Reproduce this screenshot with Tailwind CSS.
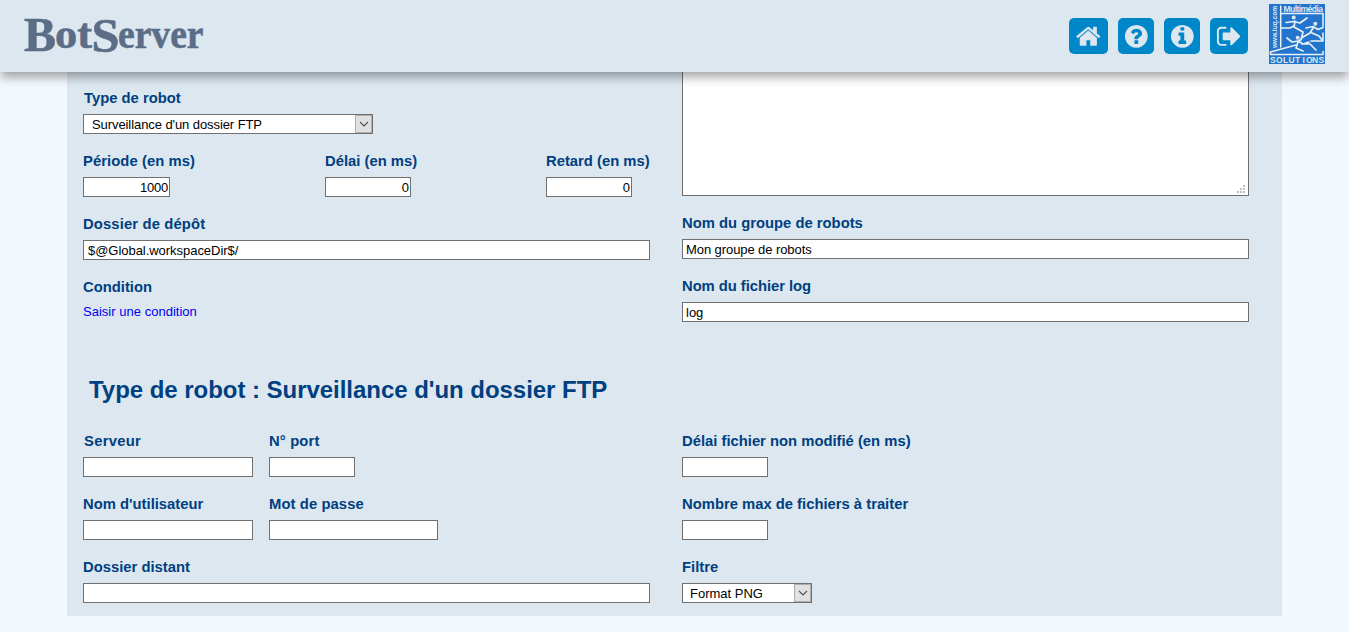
<!DOCTYPE html>
<html lang="fr">
<head>
<meta charset="utf-8">
<title>BotServer</title>
<script src="https://cdn.jsdelivr.net/npm/@tailwindcss/browser@4"></script>
</head>
<body class="h-[632px] overflow-hidden bg-[#f3f8fc] font-['Liberation_Sans',Arial,sans-serif]">
<div class="flex h-full flex-col">
  <header class="relative z-10 flex h-[72px] shrink-0 items-start justify-between bg-[#dce7ef] pr-6 shadow-[0_6px_10px_-1px_rgba(0,0,0,0.36)]">
    <svg class="h-[72px] w-[220px] fill-[#5b6d87] stroke-[#5b6d87] font-['Liberation_Serif',serif] font-bold" stroke-width="0.6" stroke-linejoin="round" viewBox="0 0 220 72" aria-label="BotServer">
      <text x="24" y="51" font-size="49" textLength="32" lengthAdjust="spacingAndGlyphs">B</text>
      <text x="55" y="47.500" font-size="43" textLength="37" lengthAdjust="spacingAndGlyphs">ot</text>
      <text x="91.500" y="52" font-size="49" textLength="28" lengthAdjust="spacingAndGlyphs">S</text>
      <text x="118" y="47.500" font-size="43" textLength="85.500" lengthAdjust="spacingAndGlyphs">erver</text>
    </svg>
    <div class="flex">
      <nav class="mt-[18px] mr-[21px] flex gap-2.5">
        <a class="flex h-9 w-[39px] items-center justify-center rounded-[5px] bg-[#0087c9]"><svg class="size-[26.67px] fill-[#dce7ef]" viewBox="0 0 1792 1792"><path d="M1472 992v480q0 26-19 45t-45 19h-384v-384h-256v384h-384q-26 0-45-19t-19-45v-480q0-1 .5-3t.5-3l575-474 575 474q1 2 1 6zm223-69l-62 74q-8 9-21 11h-3q-13 0-21-7l-692-577-692 577q-12 8-24 7-13-2-21-11l-62-74q-8-10-7-23.5t11-21.5l719-599q32-26 76-26t76 26l244 204v-195q0-14 9-23t23-9h192q14 0 23 9t9 23v408l219 182q10 8 11 21.5t-7 23.5z"/></svg></a>
        <a class="flex h-9 w-9 items-center justify-center rounded-[5px] bg-[#0087c9]"><svg class="size-[26.67px] shrink-0 fill-[#dce7ef]" viewBox="0 0 1792 1792"><path d="M1024 1376v-192q0-14-9-23t-23-9h-192q-14 0-23 9t-9 23v192q0 14 9 23t23 9h192q14 0 23-9t9-23zm256-672q0-88-55.5-163t-138.5-116-170-41q-243 0-371 213-15 24 8 42l132 100q7 6 19 6 16 0 25-12 53-68 86-92 34-24 86-24 48 0 85.5 26t37.5 59q0 38-20 61t-68 45q-63 28-115.5 86.5t-52.5 125.5v36q0 14 9 23t23 9h192q14 0 23-9t9-23q0-19 21.5-49.5t54.5-49.5q32-18 49-28.5t46-35 44.5-48 28-60.5 12.5-81zm384 192q0 209-103 385.5t-279.5 279.5-385.5 103-385.5-103-279.5-279.5-103-385.5 103-385.5 279.5-279.5 385.5-103 385.5 103 279.5 279.5 103 385.5z"/></svg></a>
        <a class="flex h-9 w-9 items-center justify-center rounded-[5px] bg-[#0087c9]"><svg class="size-[26.67px] shrink-0 fill-[#dce7ef]" viewBox="0 0 1792 1792"><path d="M1152 1376v-160q0-14-9-23t-23-9h-96v-512q0-14-9-23t-23-9h-320q-14 0-23 9t-9 23v160q0 14 9 23t23 9h96v320h-96q-14 0-23 9t-9 23v160q0 14 9 23t23 9h448q14 0 23-9t9-23zm-128-896v-160q0-14-9-23t-23-9h-192q-14 0-23 9t-9 23v160q0 14 9 23t23 9h192q14 0 23-9t9-23zm640 416q0 209-103 385.5t-279.5 279.5-385.5 103-385.5-103-279.5-279.5-103-385.5 103-385.5 279.5-279.5 385.5-103 385.5 103 279.5 279.5 103 385.5z"/></svg></a>
        <a class="flex h-9 w-[38px] items-center justify-center rounded-[5px] bg-[#0087c9]"><svg class="size-[26.67px] shrink-0 fill-[#dce7ef]" viewBox="0 0 1792 1792"><path d="M704 1440q0 4 1 20t.5 26.5-3 23.5-10 19.5-20.5 6.5h-320q-119 0-203.5-84.5t-84.5-203.5v-704q0-119 84.5-203.5t203.5-84.5h320q13 0 22.5 9.5t9.5 22.5q0 4 1 20t.5 26.5-3 23.5-10 19.5-20.5 6.5h-320q-66 0-113 47t-47 113v704q0 66 47 113t113 47h312l11.5 1 11.5 3 8 5.5 7 9 2 13.5zm928-544q0 26-19 45l-544 544q-19 19-45 19t-45-19-19-45v-288h-448q-26 0-45-19t-19-45v-384q0-26 19-45t45-19h448v-288q0-26 19-45t45-19 45 19l544 544q19 19 19 45z"/></svg></a>
      </nav>
      <svg class="mt-1 h-[60px] w-14 overflow-visible font-['Liberation_Sans',sans-serif] font-bold" viewBox="0 0 56 60">
        <rect width="56" height="60" fill="#2374cc"/>
        <g fill="#dce7ef">
          <text x="14.500" y="8" font-size="8.500" textLength="39.500" lengthAdjust="spacing">Multimédia</text>
          <text transform="translate(8 44) rotate(-90)" font-size="8" textLength="42" lengthAdjust="spacingAndGlyphs">www.luq.com</text>
          <text x="1 7 14 19.500 26 33.500 37 43 49.500" y="58.800" font-size="8.500">SOLUTIONS</text>
          <circle cx="24.700" cy="13.500" r="2"/><circle cx="46.300" cy="19.700" r="2"/><circle cx="28.700" cy="33.700" r="2"/>
        </g>
        <g fill="none" stroke="#e8f1f8" stroke-width="1.500" stroke-linejoin="round" stroke-linecap="round">
          <path d="M11.700 2v41M13 9.500H54V22M54 29v8H42M54 50.500H1.500V48L27 41M54 50.500v-3"/>
          <path stroke-width="1.700" d="M17 18.500l8-1 6 1.500 7-5M26 17l-1 6 9 5-2 8M12.500 24H21l4-2M37 24l7-1.500 5 3 5-2M44 24l-3 5-7 4-5 5M43 29l7 3 3 4M18 34l5 4 6-1 5 3 6-2M29 38l-2 6 7 3M33 40h8l6 6"/>
        </g>
      </svg>
    </div>
  </header>

  <main class="ml-[67px] h-[544px] w-[1215px] bg-[#dce7ef] pl-4 text-[13px] leading-[18px] text-black">
    <section class="flex gap-8">
      <div class="w-[567px] pt-[15px]">
        <div class="h-[63px]">
          <label class="mb-[5px] block pl-px text-[14.8px] leading-[22px] font-bold text-[#004080]">Type de robot</label>
          <div class="flex h-5 w-[290px] justify-between border border-[#707070] bg-white pl-2 tracking-[-0.08px]"><span class="pt-px">Surveillance d'un dossier FTP</span><span class="flex w-[17px] items-center justify-center border border-[#adadad] bg-[#e1e1e1]"><svg class="h-2 w-2.5" viewBox="0 0 10 8" fill="none" stroke="#505050" stroke-width="1.1"><path d="M1 2l4 4 4-4"/></svg></span></div>
        </div>
        <div class="flex h-[63px]">
          <div class="w-[242px]"><label class="mb-[5px] block text-[14.8px] leading-[22px] font-bold tracking-[0.07px] text-[#004080]">Période (en ms)</label><div class="h-5 w-[87px] border border-[#707070] bg-white pt-px pr-px text-right tracking-[-0.2px]">1000</div></div>
          <div class="w-[221px]"><label class="mb-[5px] block text-[14.8px] leading-[22px] font-bold text-[#004080]">Délai (en ms)</label><div class="h-5 w-[86px] border border-[#707070] bg-white pt-px pr-px text-right">0</div></div>
          <div class="shrink-0"><label class="mb-[5px] block text-[14.8px] leading-[22px] font-bold whitespace-nowrap text-[#004080]">Retard (en ms)</label><div class="h-5 w-[86px] border border-[#707070] bg-white pt-px pr-px text-right">0</div></div>
        </div>
        <div class="h-[63px]">
          <label class="mb-[5px] block text-[14.8px] leading-[22px] font-bold tracking-[0.14px] text-[#004080]">Dossier de dépôt</label>
          <div class="h-5 border border-[#707070] bg-white pt-px pl-1 tracking-[-0.04px]">$@Global.workspaceDir$/</div>
        </div>
        <div class="h-[63px]">
          <label class="block text-[14.8px] leading-[22px] font-bold text-[#004080]">Condition</label>
          <a class="mt-[5px] block tracking-[0.02px] text-[#0000ee]">Saisir une condition</a>
        </div>
      </div>
      <div class="w-[567px]">
        <div class="flex h-[124px] items-end justify-end border border-t-0 border-[#707070] bg-white pr-[3px] pb-0.5">
          <svg class="h-2 w-2" viewBox="0 0 8 8" fill="#bfbfbf" shape-rendering="crispEdges"><path d="M6 0h2v2H6zM3 3h2v2H3zM6 3h2v2H6zM0 6h2v2H0zM3 6h2v2H3zM6 6h2v2H6z"/></svg>
        </div>
        <div class="mt-4 h-[63px]">
          <label class="mb-[5px] block text-[14.8px] leading-[22px] font-bold text-[#004080]">Nom du groupe de robots</label>
          <div class="h-5 border border-[#707070] bg-white pt-px pl-[3px] tracking-[-0.08px]">Mon groupe de robots</div>
        </div>
        <div class="h-[63px]">
          <label class="mb-[5px] block text-[14.8px] leading-[22px] font-bold tracking-[-0.05px] text-[#004080]">Nom du fichier log</label>
          <div class="h-5 border border-[#707070] bg-white pt-px pl-[3px]">log</div>
        </div>
      </div>
    </section>
    <h2 class="mt-[35px] pl-1.5 text-2xl leading-[32px] font-bold tracking-[-0.04px] text-[#004080]">Type de robot : Surveillance d'un dossier FTP</h2>
    <section class="mt-6 flex gap-8">
      <div class="w-[567px]">
        <div class="flex h-[63px] gap-4">
          <div class="w-[170px]"><label class="mb-[5px] block pl-px text-[14.8px] leading-[22px] font-bold tracking-[0.28px] text-[#004080]">Serveur</label><div class="h-5 border border-[#707070] bg-white"></div></div>
          <div class="w-[86px]"><label class="mb-[5px] block text-[14.8px] leading-[22px] font-bold tracking-[0.15px] text-[#004080]">N° port</label><div class="h-5 border border-[#707070] bg-white"></div></div>
        </div>
        <div class="flex h-[63px] gap-4">
          <div class="w-[170px]"><label class="mb-[5px] block text-[14.8px] leading-[22px] font-bold text-[#004080]">Nom d'utilisateur</label><div class="h-5 border border-[#707070] bg-white"></div></div>
          <div class="w-[169px]"><label class="mb-[5px] block text-[14.8px] leading-[22px] font-bold tracking-[0.09px] text-[#004080]">Mot de passe</label><div class="h-5 border border-[#707070] bg-white"></div></div>
        </div>
        <label class="mb-[5px] block text-[14.8px] leading-[22px] font-bold text-[#004080]">Dossier distant</label>
        <div class="h-5 border border-[#707070] bg-white"></div>
      </div>
      <div>
        <div class="h-[63px]"><label class="mb-[5px] block text-[14.8px] leading-[22px] font-bold text-[#004080]">Délai fichier non modifié (en ms)</label><div class="h-5 w-[86px] border border-[#707070] bg-white"></div></div>
        <div class="h-[63px]"><label class="mb-[5px] block text-[14.8px] leading-[22px] font-bold text-[#004080]">Nombre max de fichiers à traiter</label><div class="h-5 w-[86px] border border-[#707070] bg-white"></div></div>
        <label class="mb-[5px] block text-[14.8px] leading-[22px] font-bold text-[#004080]">Filtre</label>
        <div class="flex h-5 w-[130px] justify-between border border-[#707070] bg-white pl-[7px]"><span class="pt-px">Format PNG</span><span class="flex w-[17px] items-center justify-center border border-[#adadad] bg-[#e1e1e1]"><svg class="h-2 w-2.5" viewBox="0 0 10 8" fill="none" stroke="#505050" stroke-width="1.1"><path d="M1 2l4 4 4-4"/></svg></span></div>
      </div>
    </section>
  </main>
</div>
</body>
</html>
